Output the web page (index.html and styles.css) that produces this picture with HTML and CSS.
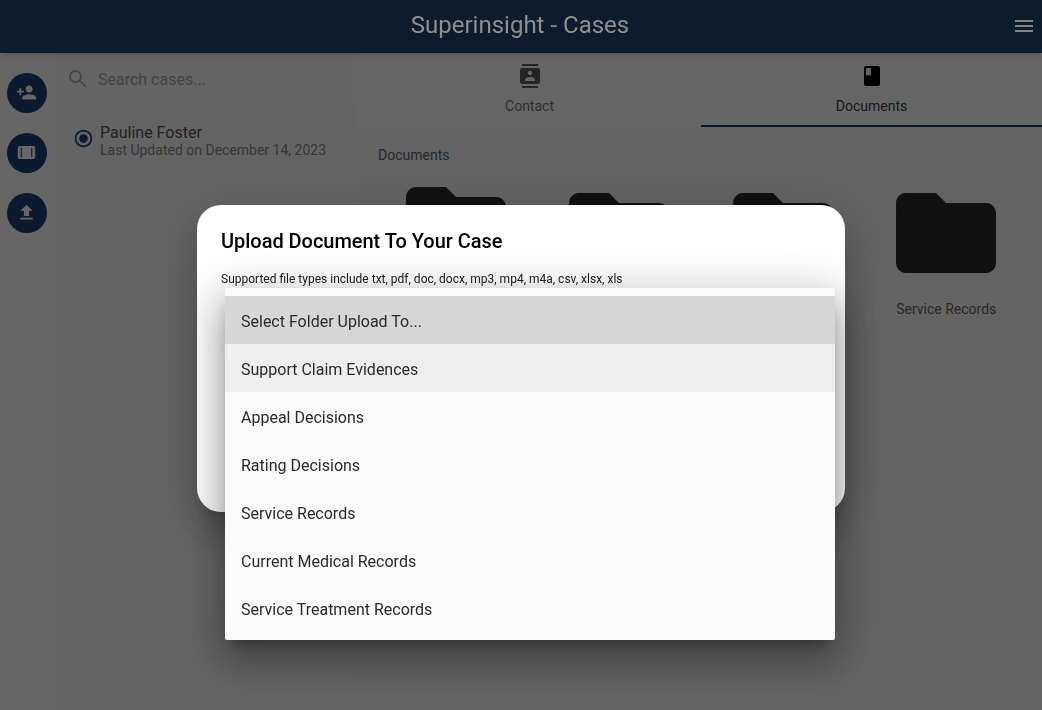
FILE: index.html
```html
<!DOCTYPE html>
<html lang="en">
<head>
<meta charset="utf-8">
<title>Superinsight - Cases</title>
<link rel="stylesheet" href="styles.css">
</head>
<body>
<div class="app">
  <header class="topbar">
    <h1 class="topbar-title">Superinsight - Cases</h1>
    <svg class="icon topbar-menu" viewBox="0 0 24 24"><path d="M3 18h18v-2H3v2zm0-5h18v-2H3v2zm0-7v2h18V6H3z"/></svg>
  </header>
  <div class="workspace">
    <nav class="rail">
      <button class="fab"><svg class="icon fab-icon" viewBox="0 0 24 24"><path d="M15 12c2.21 0 4-1.79 4-4s-1.79-4-4-4-4 1.79-4 4 1.79 4 4 4zm-9-2V7H4v3H1v2h3v3h2v-3h3v-2H6zm9 4c-2.67 0-8 1.34-8 4v2h16v-2c0-2.66-5.33-4-8-4z"/></svg></button>
      <button class="fab"><svg class="icon fab-icon" viewBox="0 0 24 24"><path fill-rule="evenodd" d="M4 4.5h16c1.1 0 2 .9 2 2v11c0 1.1-.9 2-2 2H4c-1.1 0-2-.9-2-2v-11c0-1.1.9-2 2-2zM5.4 6.5v11h1.2v-11H5.4zm12 0v11h1.2v-11h-1.2z"/></svg></button>
      <button class="fab"><svg class="icon fab-icon" viewBox="0 0 24 24"><path d="M9 16h6v-6h4l-7-7-7 7h4v6zm-4 2h14v2H5v-2z"/></svg></button>
    </nav>
    <aside class="cases">
      <div class="search">
        <svg class="icon search-icon" viewBox="0 0 24 24"><circle cx="9.5" cy="9.5" r="5.6"/><path d="M13.7 13.7L20 20"/></svg>
        <span class="search-text">Search cases...</span>
      </div>
      <div class="case">
        <svg class="icon case-radio" viewBox="0 0 24 24"><path d="M12 7c-2.76 0-5 2.24-5 5s2.24 5 5 5 5-2.24 5-5-2.24-5-5-5zm0-5C6.48 2 2 6.48 2 12s4.48 10 10 10 10-4.48 10-10S17.52 2 12 2zm0 18c-4.42 0-8-3.58-8-8s3.58-8 8-8 8 3.58 8 8-3.58 8-8 8z"/></svg>
        <div class="case-text">
          <div class="case-name">Pauline Foster</div>
          <div class="case-date">Last Updated on December 14, 2023</div>
        </div>
      </div>
    </aside>
    <main class="content">
      <div class="tabs">
        <div class="tab">
          <svg class="icon" viewBox="0 0 24 24"><path d="M20 0H4v2h16V0zM4 24h16v-2H4v2zM20 4H4c-1.1 0-2 .9-2 2v12c0 1.1.9 2 2 2h16c1.1 0 2-.9 2-2V6c0-1.1-.9-2-2-2zm-8 2.75c1.24 0 2.25 1.01 2.25 2.25s-1.01 2.25-2.25 2.25S9.75 10.24 9.75 9 10.76 6.75 12 6.75zM17 17H7v-1.5c0-1.67 3.33-2.5 5-2.5s5 .83 5 2.5V17z"/></svg>
          <span>Contact</span>
        </div>
        <div class="tab tab-active">
          <svg class="icon" viewBox="0 0 24 24"><path d="M18 2H6c-1.1 0-2 .9-2 2v16c0 1.1.9 2 2 2h12c1.1 0 2-.9 2-2V4c0-1.1-.9-2-2-2zM6 4h5v8l-2.5-1.5L6 12V4z"/></svg>
          <span>Documents</span>
        </div>
      </div>
      <section class="documents">
        <div class="documents-title">Documents</div>
        <div class="folders">
          <div class="folder folder-long"><svg class="folder-icon" viewBox="2 4 20 16"><path d="M10 4H4c-1.1 0-1.99.9-1.99 2L2 18c0 1.1.9 2 2 2h16c1.1 0 2-.9 2-2V8c0-1.1-.9-2-2-2h-8l-2-2z"/></svg><div class="folder-label">Support Claim Evidences</div></div>
          <div class="folder"><svg class="folder-icon" viewBox="2 4 20 16"><path d="M10 4H4c-1.1 0-1.99.9-1.99 2L2 18c0 1.1.9 2 2 2h16c1.1 0 2-.9 2-2V8c0-1.1-.9-2-2-2h-8l-2-2z"/></svg><div class="folder-label">Appeal Decisions</div></div>
          <div class="folder"><svg class="folder-icon" viewBox="2 4 20 16"><path d="M10 4H4c-1.1 0-1.99.9-1.99 2L2 18c0 1.1.9 2 2 2h16c1.1 0 2-.9 2-2V8c0-1.1-.9-2-2-2h-8l-2-2z"/></svg><div class="folder-label">Rating Decisions</div></div>
          <div class="folder"><svg class="folder-icon" viewBox="2 4 20 16"><path d="M10 4H4c-1.1 0-1.99.9-1.99 2L2 18c0 1.1.9 2 2 2h16c1.1 0 2-.9 2-2V8c0-1.1-.9-2-2-2h-8l-2-2z"/></svg><div class="folder-label">Service Records</div></div>
        </div>
      </section>
    </main>
  </div>
</div>
<div class="scrim"></div>
<div class="dialog">
  <h2 class="dialog-title">Upload Document To Your Case</h2>
  <p class="dialog-note">Supported file types include txt, pdf, doc, docx, mp3, mp4, m4a, csv, xlsx, xls</p>
</div>
<ul class="menu">
  <li class="menu-item menu-item-selected">Select Folder Upload To...</li>
  <li class="menu-item menu-item-hover">Support Claim Evidences</li>
  <li class="menu-item">Appeal Decisions</li>
  <li class="menu-item">Rating Decisions</li>
  <li class="menu-item">Service Records</li>
  <li class="menu-item">Current Medical Records</li>
  <li class="menu-item">Service Treatment Records</li>
</ul>
</body>
</html>
```
FILE: styles.css
```css
* { box-sizing: border-box; }
html, body { height: 100%; }
body {
  margin: 0;
  overflow: hidden;
  font-family: Roboto, "Liberation Sans", sans-serif;
  color: #212121;
  background: #fff;
}
.icon { width: 24px; height: 24px; fill: currentColor; display: block; flex: none; }
.app { display: flex; flex-direction: column; height: 100vh; }
.topbar {
  height: 53px;
  flex: none;
  background: #0d1b2f;
  color: #8f8f8f;
  display: flex;
  align-items: center;
  padding: 0 6px 2px 0;
  position: relative;
  z-index: 6;
  box-shadow: 0 2px 4px -1px rgba(0,0,0,.08), 0 4px 5px rgba(0,0,0,.06), 0 1px 10px rgba(0,0,0,.05);
}
.topbar-title {
  flex: 1;
  margin: 0 0 2px 28px;
  text-align: center;
  font-size: 24px;
  font-weight: 400;
  line-height: 32px;
}
.topbar-menu { color: #858585; }
.workspace { flex: 1; display: flex; min-height: 0; }
.rail {
  width: 57px;
  flex: none;
  padding: 20px 10px 0 7px;
  display: flex;
  flex-direction: column;
  gap: 20px;
}
.fab {
  width: 40px;
  height: 40px;
  border: 0;
  padding: 0 1px 1px 0;
  border-radius: 50%;
  background: #204375;
  color: #fff;
  display: flex;
  align-items: center;
  justify-content: center;
}
.fab-icon { width: 21px; height: 21px; }
.cases {
  width: 301px;
  flex: none;
  background: #fbfbfb;
  box-shadow: 0 0 4px rgba(0,0,0,.05);
}
.search {
  height: 52px;
  display: flex;
  align-items: center;
  padding: 0 0 0 9px;
  gap: 8px;
  box-shadow: 0 1px 2px rgba(0,0,0,.02);
  background: #fdfdfd;
}
.search-icon { fill: none; stroke: #b0b0b0; stroke-width: 1.7; }
.search-text { font-size: 16px; color: #aaa; }
.case { display: flex; padding: 19px 0 0 16px; gap: 6px; }
.case-radio { color: #204375; width: 21px; height: 21px; margin-top: 3.5px; }
.case-name { font-size: 16px; line-height: 18px; color: #555; }
.case-date { font-size: 14px; line-height: 16px; color: #8a8a8a; }
.content { flex: 1; display: flex; flex-direction: column; min-width: 0; }
.tabs {
  height: 74px;
  display: grid;
  grid-template-columns: 343px 1fr;
  flex: none;
  background: #fff;
}
.tab {
  display: flex;
  flex-direction: column;
  align-items: center;
  padding-top: 11px;
  gap: 8px;
  font-size: 14px;
  line-height: 20px;
  color: #777;
}
.tab .icon { color: #5e5e5e; }
.tab-active { color: #424242; border-bottom: 2px solid #204375; }
.tab-active .icon { color: #000; }
.documents { flex: 1; padding: 20px 14px 0 16px; background: #fafafa; }
.documents-title { font-size: 14px; line-height: 16px; padding-left: 4px; color: #666; }
.folders {
  display: grid;
  grid-template-columns: repeat(4, 1fr);
  align-items: center;
  margin-top: 12px;
}
.folder { display: flex; flex-direction: column; align-items: center; }
.folder-icon { width: 100px; height: 80px; display: block; fill: #292929; margin-top: 12px; }
.folder-label { margin-top: 26px; font-size: 14px; line-height: 20px; color: #666; text-align: center; }
.folder-long .folder-label { max-width: 90px; line-height: 16px; }
.scrim { position: fixed; inset: 0; background: rgba(0,0,0,.6); z-index: 5; }
.dialog {
  position: fixed;
  left: 197px;
  top: 205px;
  width: 648px;
  height: 307px;
  padding: 24px;
  background: #fff;
  border-radius: 24px;
  z-index: 7;
  box-shadow: 0 11px 15px -7px rgba(0,0,0,.2), 0 24px 38px 3px rgba(0,0,0,.14), 0 9px 46px 8px rgba(0,0,0,.12);
}
.dialog-title { margin: 0; font-size: 20px; font-weight: 500; line-height: 24px; color: #000; letter-spacing: -.03px; }
.dialog-note { margin: 18px 0 0 0; font-size: 12px; line-height: 16px; color: #212121; }
.menu {
  position: fixed;
  left: 225px;
  top: 288px;
  width: 610px;
  margin: 0;
  padding: 8px 0;
  list-style: none;
  background: #fafafa;
  z-index: 8;
  border-radius: 2px;
  box-shadow: 0 11px 15px -7px rgba(0,0,0,.3), 0 24px 38px 3px rgba(0,0,0,.22), 0 9px 46px 8px rgba(0,0,0,.18);
}
.menu-item { height: 48px; line-height: 52px; padding: 0 16px; font-size: 16px; color: #2a2a2a; }
.menu-item-selected { background: #d6d6d6; }
.menu-item-hover { background: #eee; }
```
